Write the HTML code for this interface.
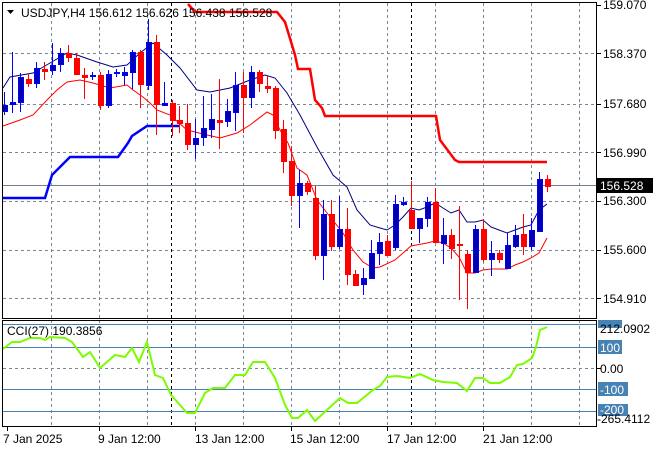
<!DOCTYPE html>
<html><head><meta charset="utf-8"><style>
html,body{margin:0;padding:0;background:#fff;width:660px;height:450px;overflow:hidden}
svg{display:block}
text{font-family:"Liberation Sans",sans-serif;font-size:12px;fill:#000}
</style></head><body>
<svg width="660" height="450" viewBox="0 0 660 450" xmlns="http://www.w3.org/2000/svg">
<rect width="660" height="450" fill="#fff"/>
<g stroke="#778899" stroke-width="1" stroke-dasharray="3,3" fill="none">
<path d="M51.5 3V318M99.5 3V318M147.5 3V318M195.5 3V318M243.5 3V318M291.5 3V318M339.5 3V318M387.5 3V318M435.5 3V318M483.5 3V318M531.5 3V318M579.5 3V318"/>
<path d="M3 53.5H597M3 104.5H597M3 152.5H597M3 201.5H597M3 250.5H597M3 298.5H597"/>
<path d="M51.5 320V426M99.5 320V426M147.5 320V426M195.5 320V426M243.5 320V426M291.5 320V426M339.5 320V426M387.5 320V426M435.5 320V426M483.5 320V426M531.5 320V426M579.5 320V426"/>
<path d="M3 368.5H597"/>
</g>
<g stroke="#000" stroke-dasharray="3,3"><path d="M171.5 3V318M411.5 3V318M171.5 320V426M411.5 320V426"/></g>
<path d="M3 185.5H597" stroke="#708090"/>
<g stroke="#4682b4"><path d="M3 324.5H597M3 347.5H597M3 389.5H597M3 411.5H597"/></g>
<!-- thick lines -->
<polyline fill="none" stroke="#0000ff" stroke-width="2.5" points="3,198 45,198 52,175 70,157 118,157 128,143 132,136 147,126 180,126"/>
<polyline fill="none" stroke="#ff0000" stroke-width="2.5" points="188,4 195,12 277,12 285,22 295,55 298,69 310,69 315,100 322,108 325,116 436,116 440,140 455,160 459,162 547,162"/>
<!-- MA lines -->
<polyline fill="none" stroke="#000080" stroke-width="1" points="3,88 10,77 33,73 50,63 67,53 77,55 97,62 113,67 127,65 140,53 153,43 167,55 180,68 197,90 210,92 230,88 250,80 265,75 275,78 287,93 300,115 317,147 333,175 347,187 357,210 370,225 380,228 387,230 395,225 403,217 411,208 419,210 427,207 435,203 443,208 451,213 459,210 467,222 475,222 483,220 491,227 499,230 507,233 515,230 523,227 531,225 539,210 547,204"/>
<polyline fill="none" stroke="#ff0000" stroke-width="1" points="3,126 20,120 33,115 47,100 57,90 67,82 80,80 93,83 110,88 127,85 133,90 143,97 150,103 157,110 170,115 187,130 203,134 220,138 237,133 250,125 267,112 273,115 280,130 288,143 297,168 307,175 317,200 327,213 343,233 353,250 363,262 373,268 380,267 395,260 403,253 411,246 427,243 435,241 443,243 451,248 459,257 467,273 475,273 483,270 491,269 507,269 515,265 523,262 531,258 539,253 547,238"/>
<g id="c"></g>
<!-- candles -->
<g stroke-width="1">
<g stroke="#0000ff" fill="#0000b0">
<path d="M4.5 92V115M12.5 52V113M20.5 73V112M36.5 62V88M52.5 43V75M60.5 48V72M92.5 72V80M108.5 70V108M116.5 69V77M124.5 67V85M132.5 50V89M148.5 19V90M164.5 82V106M195.5 119V159M203.5 96V146M211.5 94V138M227.5 99V127M235.5 72V131M251.5 66V108M299.5 170V228M323.5 200V280M339.5 196V249M363.5 268V295M371.5 240V278M379.5 233V265M395.5 195V250M403.5 197V206M419.5 218V243M427.5 197V227M443.5 218V264M475.5 225V272M491.5 241V276M507.5 233V268M515.5 225V248M531.5 218V250M539.5 172V231"/>
<rect x="2.5" y="105.5" width="5" height="6"/><rect x="10.5" y="102.5" width="5" height="2"/><rect x="18.5" y="77.5" width="5" height="25"/><rect x="34.5" y="68.5" width="5" height="15"/><rect x="50.5" y="65.5" width="5" height="5"/><rect x="58.5" y="53.5" width="5" height="11"/><rect x="90.5" y="75.5" width="5" height="1"/><rect x="106.5" y="74.5" width="5" height="31"/><rect x="114.5" y="72.5" width="5" height="1"/><rect x="122.5" y="72.5" width="5" height="3"/><rect x="130.5" y="52.5" width="5" height="20"/><rect x="146.5" y="42.5" width="5" height="43"/><rect x="162.5" y="103.5" width="5" height="2"/><rect x="193.5" y="138.5" width="5" height="6"/><rect x="201.5" y="128.5" width="5" height="9"/><rect x="209.5" y="119.5" width="5" height="10"/><rect x="225.5" y="111.5" width="5" height="10"/><rect x="233.5" y="85.5" width="5" height="27"/><rect x="249.5" y="72.5" width="5" height="25"/><rect x="297.5" y="183.5" width="5" height="12"/><rect x="321.5" y="214.5" width="5" height="41"/><rect x="337.5" y="229.5" width="5" height="17"/><rect x="361.5" y="278.5" width="5" height="6"/><rect x="369.5" y="253.5" width="5" height="25"/><rect x="377.5" y="242.5" width="5" height="11"/><rect x="393.5" y="204.5" width="5" height="43"/><rect x="401.5" y="202.5" width="5" height="2"/><rect x="417.5" y="218.5" width="5" height="10"/><rect x="425.5" y="202.5" width="5" height="16"/><rect x="441.5" y="235.5" width="5" height="8"/><rect x="473.5" y="229.5" width="5" height="43"/><rect x="489.5" y="253.5" width="5" height="6"/><rect x="505.5" y="245.5" width="5" height="23"/><rect x="513.5" y="235.5" width="5" height="11"/><rect x="529.5" y="230.5" width="5" height="16"/><rect x="537.5" y="179.5" width="5" height="52"/>
</g>
<g stroke="#ff0000" fill="#ff0000">
<path d="M28.5 74V87M44.5 62V80M68.5 45V62M76.5 53V74M84.5 68V99M100.5 72V110M140.5 50V108M156.5 35V135M172.5 100V136M179.5 106V133M187.5 104V150M219.5 79V149M243.5 72V133M259.5 70V92M267.5 76V93M275.5 86V139M283.5 120V173M291.5 146V206M307.5 181V195M315.5 186V260M331.5 200V251M347.5 208V285M355.5 270V286M387.5 235V255M411.5 181V228M435.5 188V242M451.5 229V259M459.5 206V300M467.5 250V309M483.5 219V262M499.5 250V263M523.5 214V255M547.5 175V192"/>
<rect x="26.5" y="79.5" width="5" height="4"/><rect x="42.5" y="69.5" width="5" height="2"/><rect x="66.5" y="53.5" width="5" height="4"/><rect x="74.5" y="58.5" width="5" height="16"/><rect x="82.5" y="75.5" width="5" height="2"/><rect x="98.5" y="75.5" width="5" height="30"/><rect x="138.5" y="52.5" width="5" height="32"/><rect x="154.5" y="42.5" width="5" height="62"/><rect x="170.5" y="103.5" width="5" height="17"/><rect x="177.5" y="120.5" width="5" height="3"/><rect x="185.5" y="123.5" width="5" height="21"/><rect x="217.5" y="120.5" width="5" height="2"/><rect x="241.5" y="85.5" width="5" height="12"/><rect x="257.5" y="72.5" width="5" height="11"/><rect x="265.5" y="86.5" width="5" height="2"/><rect x="273.5" y="88.5" width="5" height="42"/><rect x="281.5" y="129.5" width="5" height="32"/><rect x="289.5" y="161.5" width="5" height="34"/><rect x="305.5" y="183.5" width="5" height="8"/><rect x="313.5" y="198.5" width="5" height="57"/><rect x="329.5" y="214.5" width="5" height="32"/><rect x="345.5" y="229.5" width="5" height="45"/><rect x="353.5" y="274.5" width="5" height="11"/><rect x="385.5" y="241.5" width="5" height="14"/><rect x="409.5" y="210.5" width="5" height="18"/><rect x="433.5" y="202.5" width="5" height="40"/><rect x="449.5" y="235.5" width="5" height="13"/><rect x="457.5" y="244.5" width="5" height="1"/><rect x="465.5" y="254.5" width="5" height="18"/><rect x="481.5" y="229.5" width="5" height="30"/><rect x="497.5" y="253.5" width="5" height="6"/><rect x="521.5" y="234.5" width="5" height="12"/><rect x="545.5" y="179.5" width="5" height="7"/>
</g>
</g>
<!-- CCI -->
<polyline fill="none" stroke="#7cfc00" stroke-width="2" points="3,349 12,342 20,342 30,338 40,338 45,340 50,337 65,338 72,342 83,357 90,352 100,368 115,355 125,357 132,348 139,362 147,342 155,375 163,378 171,395 180,405 187,413 195,413 205,393 213,388 225,388 235,375 245,375 253,362 265,362 275,378 285,405 292,418 298,418 307,410 315,421 340,398 348,403 357,403 373,390 380,386 387,377 397,376 410,378 420,374 433,380 443,382 457,383 467,391 475,378 483,378 490,383 500,383 510,377 517,365 523,364 532,358 536,347 540,330 547,327"/>
<!-- frames -->
<g fill="none" stroke="#000" stroke-width="1">
<rect x="2.5" y="2.5" width="594" height="316"/>
<rect x="2.5" y="320.5" width="594" height="106"/>
</g>
<!-- right axis -->
<g stroke="#000"><path d="M597 5.5H601M597 53.5H601M597 104.5H601M597 152.5H601M597 201.5H601M597 250.5H601M597 298.5H601M597 368.5H601"/>
<path d="M7.5 427V431M99.5 427V431M195.5 427V431M291.5 427V431M387.5 427V431M483.5 427V431"/></g>
<text x="603" y="9">159.070</text>
<text x="603" y="58">158.370</text>
<text x="603" y="108">157.680</text>
<text x="603" y="157">156.990</text>
<text x="603" y="205">156.300</text>
<text x="603" y="254">155.600</text>
<text x="603" y="303">154.910</text>
<rect x="597" y="178" width="56" height="15" fill="#000"/>
<text x="600" y="190" style="fill:#fff">156.528</text>
<rect x="598" y="320" width="24" height="8" fill="#4682b4"/>
<rect x="598" y="340" width="24" height="14" fill="#4682b4"/>
<rect x="598" y="382" width="30" height="14" fill="#4682b4"/>
<rect x="598" y="404" width="30" height="12" fill="#4682b4"/>
<text x="600" y="352" style="fill:#fff">100</text>
<text x="600" y="394" style="fill:#fff">-100</text>
<text x="600" y="414" style="fill:#fff">-200</text>
<text x="600" y="333">212.0902</text>
<text x="600" y="373">0.00</text>
<text x="597" y="423">-265.4112</text>
<!-- titles -->
<path d="M7 10H14L10.5 14Z" fill="#000"/>
<text x="21" y="17">USDJPY,H4  156.612 156.626 156.438 156.528</text>
<text x="7" y="335">CCI(27) 190.3856</text>
<!-- bottom axis -->
<text x="3" y="443">7 Jan 2025</text>
<text x="98" y="443">9 Jan 12:00</text>
<text x="195" y="443">13 Jan 12:00</text>
<text x="290" y="443">15 Jan 12:00</text>
<text x="387" y="443">17 Jan 12:00</text>
<text x="483" y="443">21 Jan 12:00</text>
</svg>
</body></html>
